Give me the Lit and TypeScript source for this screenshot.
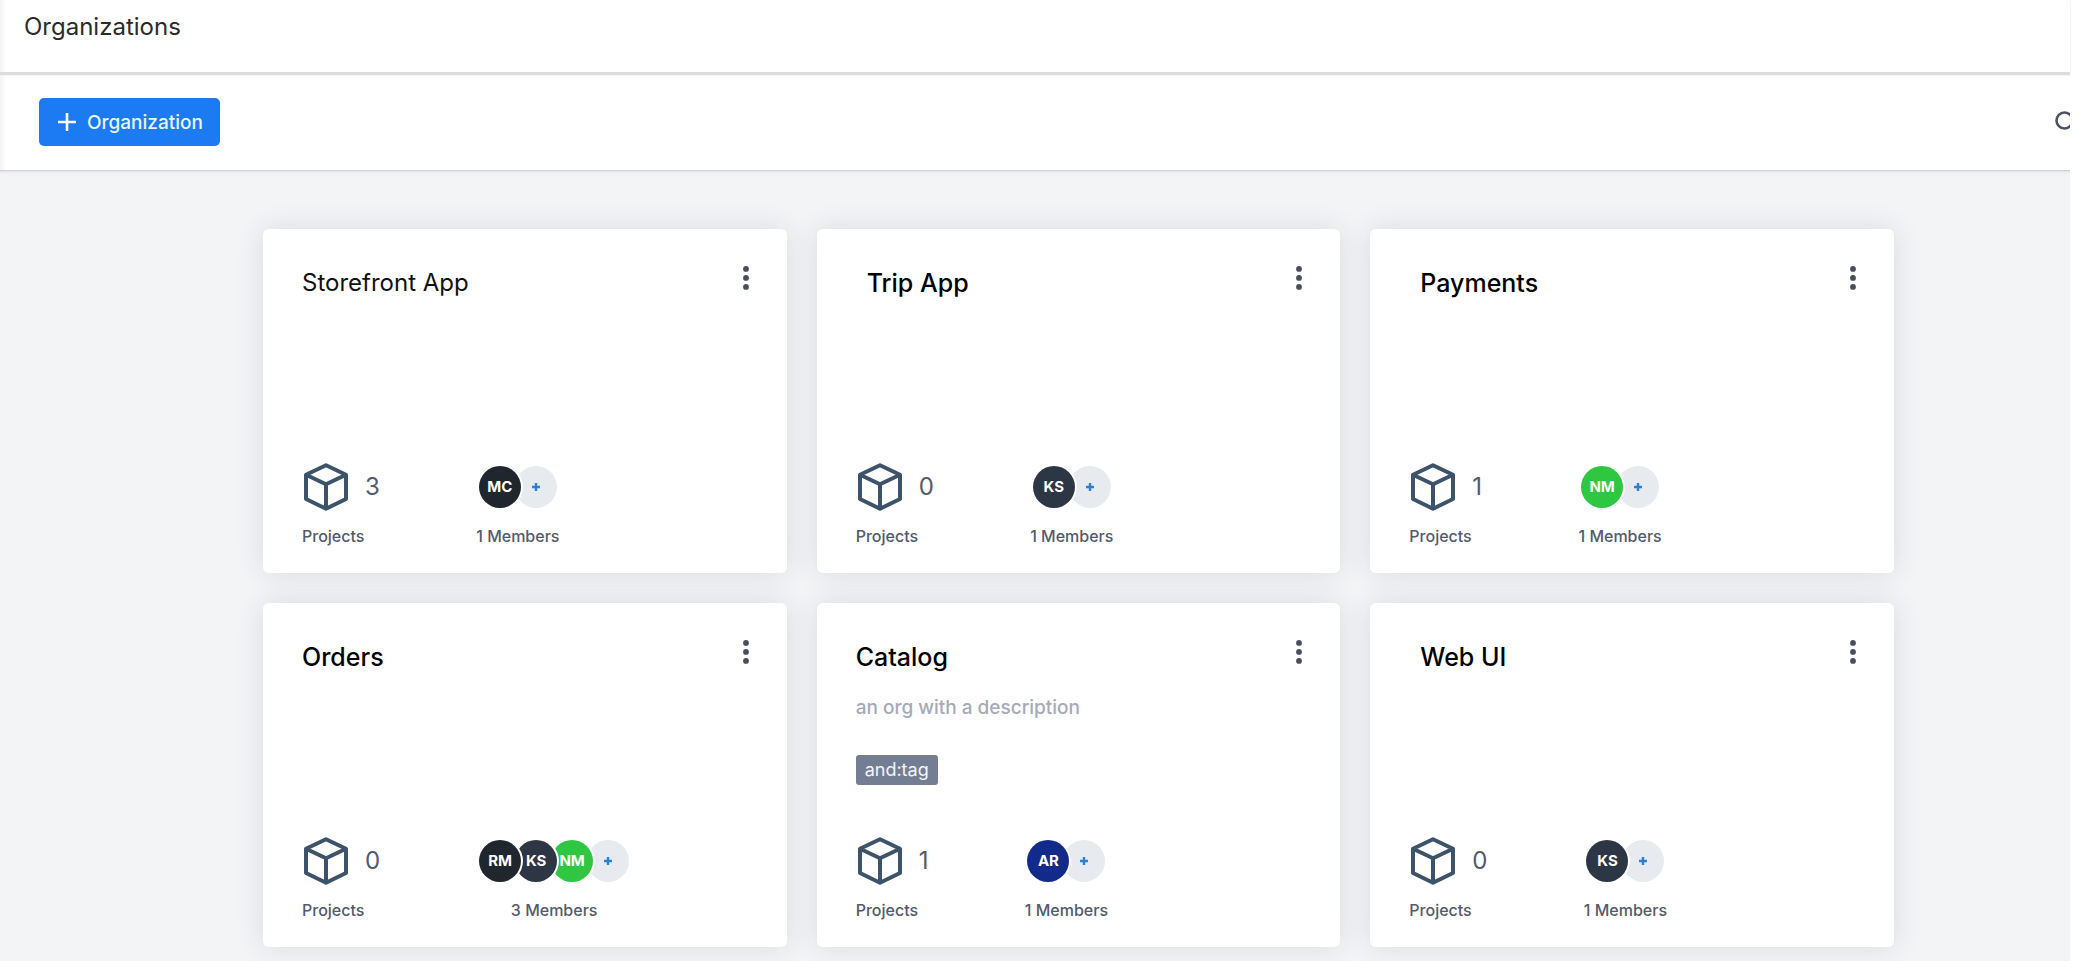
import { LitElement, html, css, svg, nothing } from "lit";
import { customElement, property } from "lit/decorators.js";
import { classMap } from "lit/directives/class-map.js";
import { styleMap } from "lit/directives/style-map.js";

interface Member {
  initials: string;
  color: string;
}

interface Organization {
  name: string;
  projects: number;
  members: Member[];
  description?: string;
  tags?: string[];
  tone?: "plain" | "strong";
  inset?: boolean;
}

const MC: Member = { initials: "MC", color: "#20262d" };
const RM: Member = { initials: "RM", color: "#20262d" };
const KS: Member = { initials: "KS", color: "#2d3644" };
const NM: Member = { initials: "NM", color: "#2fc641" };
const AR: Member = { initials: "AR", color: "#122b8a" };

const ORGANIZATIONS: Organization[] = [
  { name: "Storefront App", projects: 3, members: [MC], tone: "plain" },
  { name: "Trip App", projects: 0, members: [KS], inset: true },
  { name: "Payments", projects: 1, members: [NM], inset: true },
  { name: "Orders", projects: 0, members: [RM, KS, NM] },
  {
    name: "Catalog",
    projects: 1,
    members: [AR],
    description: "an org with a description",
    tags: ["and:tag"],
  },
  { name: "Web UI", projects: 0, members: [KS], inset: true },
];

const cubeIcon = html`<svg class="cube" viewBox="-2 0 46 48" aria-hidden="true">
  ${svg`<path d="M22 2.3 42 11.8V36L22 45.7 2 36V11.8ZM2.5 12 22 21.3 41.5 12M22 21.3V45"
    fill="none" stroke="#3d5369" stroke-width="4" stroke-linejoin="round" />`}
</svg>`;

@customElement("org-card")
export class OrgCard extends LitElement {
  @property({ attribute: false }) org!: Organization;

  static styles = css`
    :host {
      display: flex;
      flex-direction: column;
      box-sizing: border-box;
      min-height: 344px;
      padding: 37px 32px 25px 39px;
      border-radius: 6px;
      background: #fff;
      box-shadow: 0 0 28px rgba(40, 42, 56, 0.12);
    }
    .head {
      display: flex;
      justify-content: space-between;
      align-items: flex-start;
    }
    .name {
      margin: 0;
      font-size: 25px;
      line-height: 34px;
      font-weight: 500;
      color: #000;
    }
    .name.plain {
      font-size: 24px;
      font-weight: 400;
      color: #111;
    }
    .name.inset {
      padding-left: 11px;
    }
    button {
      padding: 0;
      border: 0;
      background: none;
      font: inherit;
      cursor: pointer;
    }
    .menu {
      display: flex;
      width: 18px;
      height: 24px;
    }
    .menu svg {
      width: 18px;
      height: 24px;
    }
    .description {
      margin: 22px 0 0;
      font-size: 19px;
      line-height: 24px;
      font-weight: 500;
      color: #a5aab7;
    }
    .tags {
      display: flex;
      gap: 8px;
      margin: 35px 0 0;
      padding: 0;
      list-style: none;
    }
    .tag {
      padding: 0 9px;
      border-radius: 3px;
      background: #737e95;
      color: #f3f5f9;
      font-size: 18px;
      line-height: 30px;
    }
    .stats {
      display: flex;
      gap: 96px;
      margin-top: auto;
      font-size: 16px;
      line-height: 24px;
      font-weight: 500;
      color: #525a6c;
    }
    .projects {
      display: flex;
      flex-direction: column;
      gap: 13px;
    }
    .count {
      display: flex;
      align-items: center;
      gap: 17px;
      font-size: 24px;
      font-weight: 400;
    }
    .cube {
      width: 46px;
      height: 48px;
    }
    .members {
      display: flex;
      flex-direction: column;
      align-items: center;
      gap: 13px;
    }
    .stack {
      display: flex;
      align-items: center;
      height: 48px;
      padding: 0 3px;
      isolation: isolate;
    }
    .avatar {
      position: relative;
      display: grid;
      place-items: center;
      width: 42px;
      height: 42px;
      border-radius: 50%;
      box-shadow: 0 0 0 2px #fff;
      color: #fff;
      font-size: 15px;
      font-weight: 700;
    }
    .avatar + .avatar {
      margin-left: -6px;
    }
    .avatar.add {
      background: #e7eaee;
      color: #2b7fd6;
    }
    .add svg {
      width: 10px;
      height: 10px;
    }
  `;

  render() {
    const { name, projects, members, description, tags, tone, inset } = this.org;
    return html`
      <div class="head">
        <h2 class=${classMap({ name: true, plain: tone === "plain", inset: !!inset })}>${name}</h2>
        <button class="menu" type="button" aria-label="${name} menu">
          <svg viewBox="0 0 18 24" fill="#4a4f5c" aria-hidden="true">
            <circle cx="9" cy="2.9" r="2.9" />
            <circle cx="9" cy="11.9" r="2.9" />
            <circle cx="9" cy="20.9" r="2.9" />
          </svg>
        </button>
      </div>
      ${description ? html`<p class="description">${description}</p>` : nothing}
      ${tags ? html`<ul class="tags">${tags.map((t) => html`<li class="tag">${t}</li>`)}</ul>` : nothing}
      <div class="stats">
        <div class="projects">
          <div class="count">${cubeIcon}<span>${projects}</span></div>
          <span>Projects</span>
        </div>
        <div class="members">
          <div class="stack">
            ${members.map(
              (m, i) => html`<span
                class="avatar"
                style=${styleMap({ background: m.color, zIndex: String(members.length - i) })}
                >${m.initials}</span
              >`
            )}
            <button class="avatar add" type="button" aria-label="Add member to ${name}">
              <svg viewBox="0 0 10 10" aria-hidden="true">
                <path d="M5 1v8M1 5h8" stroke="currentColor" stroke-width="2.4" />
              </svg>
            </button>
          </div>
          <span>${members.length} Members</span>
        </div>
      </div>
    `;
  }
}

@customElement("app-root")
export class AppRoot extends LitElement {
  static styles = css`
    :host {
      display: block;
      padding-right: 18px;
      background: #fff;
      font-family: Inter, "Liberation Sans", sans-serif;
    }
    .top {
      background: linear-gradient(to right, #f4f4f6, #fff 6px);
    }
    .header {
      padding: 11px 24px 29px;
      border-bottom: 3px solid #dcdcdc;
      box-shadow: 0 0 2px #e4e4e4;
    }
    .title {
      margin: 0;
      font-size: 24px;
      line-height: 32px;
      font-weight: 400;
      color: #2a2a2d;
    }
    .toolbar {
      display: flex;
      justify-content: space-between;
      align-items: center;
      padding: 23px 0 24px 39px;
      border-bottom: 1px solid #d0d1d4;
      overflow: hidden;
    }
    button {
      padding: 0;
      border: 0;
      background: none;
      font: inherit;
      cursor: pointer;
    }
    .create {
      display: flex;
      align-items: center;
      gap: 11px;
      height: 48px;
      padding: 0 17px 0 19px;
      border-radius: 5px;
      background: #1c7bf2;
      color: #e9f6ff;
      font-size: 19px;
      font-weight: 500;
    }
    .create svg {
      width: 18px;
      height: 18px;
    }
    .search {
      display: flex;
      flex: none;
      width: 28px;
      margin-right: -12px;
    }
    .search svg {
      width: 28px;
      height: 28px;
    }
    .board {
      display: grid;
      grid-template-columns: repeat(3, minmax(0, 1fr));
      gap: 30px;
      padding: 58px 176px 14px 263px;
      background: #f3f4f6;
      box-shadow: inset 0 3px 3px -2px #dfe0e4;
      overflow: hidden;
    }
  `;

  render() {
    return html`
      <div class="top">
        <header class="header"><h1 class="title">Organizations</h1></header>
        <div class="toolbar">
          <button class="create" type="button">
            <svg viewBox="0 0 18 18" aria-hidden="true">
              <path d="M9 0v18M0 9h18" stroke="#fff" stroke-width="2.6" />
            </svg>
            Organization
          </button>
          <button class="search" type="button" aria-label="Search">
            <svg viewBox="0 0 28 28" fill="none" stroke="#4a5262" stroke-width="2.6" aria-hidden="true">
              <circle cx="10.5" cy="12.5" r="8" />
              <path d="m16.5 18.5 8 8" />
            </svg>
          </button>
        </div>
      </div>
      <main class="board">
        ${ORGANIZATIONS.map((org) => html`<org-card .org=${org}></org-card>`)}
      </main>
    `;
  }
}
